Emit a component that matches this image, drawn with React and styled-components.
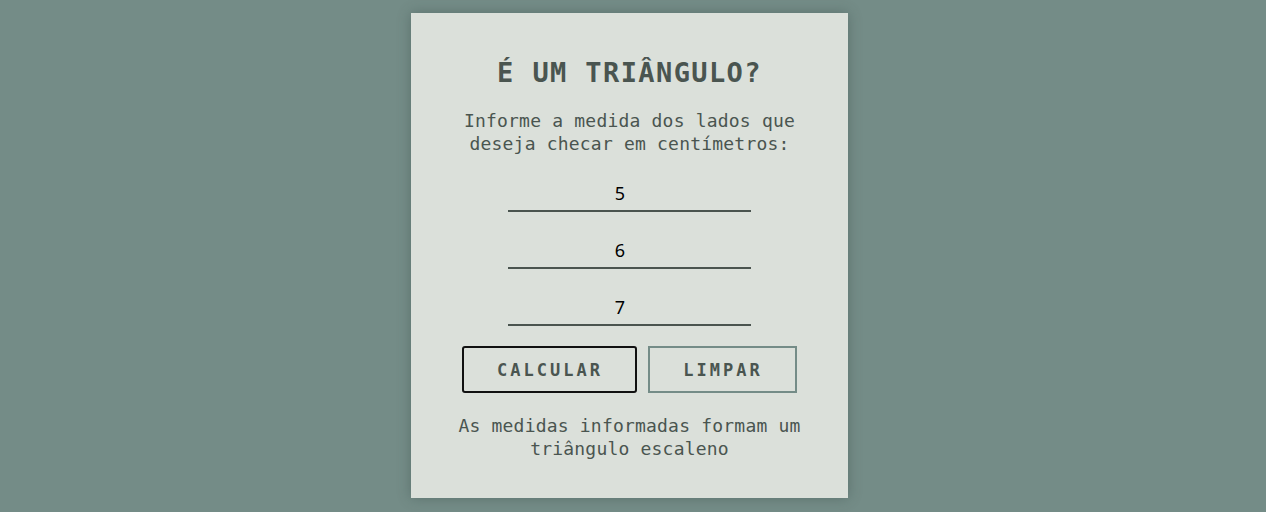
import React, { useState } from "react";
import styled, { createGlobalStyle } from "styled-components";

const GlobalStyle = createGlobalStyle`
  html, body {
    margin: 0;
    padding: 0;
    background: #748c87;
    font-family: "DejaVu Sans Mono", "Liberation Mono", monospace;
  }
`;

const App = () => {
  const [sides, setSides] = useState(["5", "6", "7"]);

  return (
    <React.Fragment>
      <GlobalStyle />
      <Page>
        <Card>
          <Title>É UM TRIÂNGULO?</Title>
          <Text>
            Informe a medida dos lados que
            <br />
            deseja checar em centímetros:
          </Text>
          <Fields>
            {sides.map((value, i) => (
              <SideInput
                key={i}
                type="text"
                value={value}
                onChange={(e) => {
                  const next = [...sides];
                  next[i] = e.target.value;
                  setSides(next);
                }}
              />
            ))}
          </Fields>
          <Buttons>
            <StyledButton $primary>CALCULAR</StyledButton>
            <StyledButton>LIMPAR</StyledButton>
          </Buttons>
          <Result>
            As medidas informadas formam um
            <br />
            triângulo escaleno
          </Result>
        </Card>
      </Page>
    </React.Fragment>
  );
};

export default App;

const Page = styled.div`
  display: flex;
  justify-content: center;
  padding: 13px 7px 0 0;
  min-height: 512px;
  box-sizing: border-box;
`;

const Card = styled.div`
  width: 437px;
  height: 485px;
  box-sizing: border-box;
  background: #dbe0da;
  box-shadow: 0 0 12px rgba(60, 80, 75, 0.45);
  display: flex;
  flex-direction: column;
  align-items: center;
  padding-top: 44px;
  color: #4a5550;
`;

const Title = styled.h1`
  margin: 0;
  font-size: 27px;
  line-height: 32px;
  font-weight: bold;
  letter-spacing: 1.4px;
`;

const Text = styled.p`
  margin: 20px 0 0;
  font-size: 18px;
  line-height: 23px;
  letter-spacing: 0.2px;
  text-align: center;
`;

const Fields = styled.div`
  display: flex;
  flex-direction: column;
  gap: 26px;
  margin-top: 26px;
`;

const SideInput = styled.input`
  width: 243px;
  height: 31px;
  box-sizing: border-box;
  border: none;
  border-bottom: 2px solid #4a544f;
  background: transparent;
  text-align: center;
  font-family: "Noto Sans", "Open Sans", sans-serif;
  font-size: 18px;
  color: #000;
  outline: none;
  padding: 0 19px 6px 0;
`;

const Buttons = styled.div`
  display: flex;
  gap: 11px;
  margin-top: 20px;
`;

const StyledButton = styled.button`
  width: ${(p) => (p.$primary ? "175px" : "149px")};
  height: 47px;
  box-sizing: border-box;
  background: transparent;
  border: 2px solid ${(p) => (p.$primary ? "#111" : "#748c87")};
  border-radius: ${(p) => (p.$primary ? "3px" : "0")};
  font-family: "DejaVu Sans Mono", "Liberation Mono", monospace;
  font-size: 17px;
  font-weight: bold;
  letter-spacing: 3px;
  color: #4a5550;
  cursor: pointer;
  padding: 0 0 0 1px;
`;

const Result = styled.p`
  margin: 21px 0 0;
  font-size: 18px;
  line-height: 23px;
  letter-spacing: 0.2px;
  text-align: center;
`;
